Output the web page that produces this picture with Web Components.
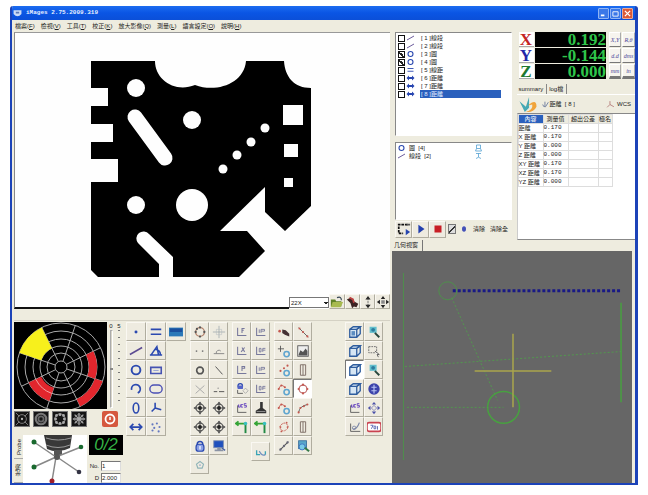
<!DOCTYPE html>
<html lang="zh-Hant">
<head>
<meta charset="utf-8">
<title>iMages 2.75.2009.319</title>
<style>
  html, body { height: 100%; margin: 0; }
  body {
    box-sizing: border-box; padding: 6px 10px 12px; background: #fff; color: #222;
    font-family: "Liberation Sans", "Noto Sans CJK TC", sans-serif; font-size: 6px; line-height: 8px;
  }
</style>
</head>
<body>
<app-window></app-window>
<script>
const define = (name, html, setup) => {
  const t = document.createElement('template');
  t.innerHTML = '<style>*{box-sizing:border-box}button,input,select{font:inherit;color:inherit;margin:0;padding:0;border-radius:0}svg{display:block}</style>' + html;
  customElements.define(name, class extends HTMLElement {
    constructor() {
      super();
      this.attachShadow({ mode: 'open' }).appendChild(t.content.cloneNode(true));
    }
    connectedCallback() { if (setup && !this.ready) { this.ready = true; setup(this, this.shadowRoot); } }
  });
};

const B = '#2b49b0', D = '#555', R = '#c4574e', L = '#77789c';
const p = (d, c = B, w = 1.5, f = 'none') => `<path d="${d}" fill="${f}" stroke="${c}" stroke-width="${w}"/>`;
const c = (x, y, r, s = B, w = 1.5, f = 'none') => `<circle cx="${x}" cy="${y}" r="${r}" fill="${f}" stroke="${s}" stroke-width="${w}"/>`;
const dots = (list, col = B, r = 1.1) => list.map(([x, y]) => `<circle cx="${x}" cy="${y}" r="${r}" fill="${col}"/>`).join('');
const target = p('M8 1V15M1 8H15', D, 1.2) + c(8, 8, 4.5, D, 1.4) + dots([[8, 8]], '#222', 2.2) + p('M8 1l-1.5 2h3zM8 15l-1.5-2h3zM1 8l2-1.5v3zM15 8l-2-1.5v3z', D, .5, D);
const axis = p('M3 3V12H13', L, 1.2);
const cube = p('M2 5H10V14H2ZM2 5L6 2H14L10 5M14 2V10L10 14', '#2f5d9e', 1.5, '#d6e6f4') + p('M10 5L14 2', '#2f5d9e', 1.4);
const blueRing = c(11, 11.5, 3, '#5fa5cf', 1.8);
const ICONS = {
  point: dots([[8, 8]], B, 1.7),
  lines: p('M2 5H14M2 10.5H14', B, 1.8),
  screen: '<rect x="0" y="3" width="16" height="10" fill="#2a78b8"/><rect x="1" y="4" width="14" height="4" fill="#1a4f9d"/>',
  line: p('M1 12L15 4', '#5b4a91', 1.8),
  angle: p('M2 13L9 3L11 13M1 12.500H15M7 6Q13 7 13 12', B, 1.8),
  circle: c(8, 8, 5, B, 2.2),
  rect: p('M2 5H14V12H2Z', '#4653b2', 1.8) + p('M5 8.500H11', '#8b97d1', 1),
  arc: p('M3 9A5 5 0 1 1 10 12.5', B, 2),
  slot: '<rect x="1" y="3.500" width="14" height="9" rx="4.500" fill="none" stroke="#4b50b5" stroke-width="1.6"/>',
  ellipse: '<ellipse cx="8" cy="8" rx="3.2" ry="5.8" fill="none" stroke="#2b49b0" stroke-width="1.8"/>',
  fork: p('M7 2V8L3 12M7 8L14 10', B, 1.8),
  distance: p('M2 8H14M5 4.5L1.5 8L5 11.5M11 4.5L14.5 8L11 11.5', B, 2),
  measure: '<path d="M0 8L5 3V6H11V3L16 8L11 13V10H5V13Z" fill="#2745b0"/>',
  cloud: dots([[4, 5], [9, 4], [6, 9], [12, 8], [11, 13], [4, 12]], '#6478c0', 1.2),
  ringdots: c(8, 8, 5, '#b4836d', 1.6) + dots([[8, 2.8], [13, 8], [8, 13.2], [3, 8], [4.5, 4.5]], D, 1.3),
  crosshair: p('M8 1V15M1 8H15', '#96a0a8', .8) + p('M5 5H11V11H5Z', '#b5bcc0', .6),
  twodots: dots([[4, 8], [11, 8]], '#777', 1),
  perp: p('M2 11H14M5 11A3 3 0 0 1 10 8', '#888', 1.1),
  ring: c(8, 8.5, 3.8, D, 1.9),
  diag: p('M4 4L12 13', D, 1.1),
  cross: p('M3 4L13 13M13 4L3 13', '#aaa', 1.1),
  dashline: p('M2 11H6M8 11H14', D, 1.1) + dots([[7, 7]], '#888', .8),
  target,
  lock: c(8, 6, 3.2, B, 1.7) + '<rect x="3.5" y="6" width="9" height="8" rx="3" fill="#8ba0e5" stroke="#2b49b0" stroke-width="1.4"/><path d="M8 8V12" stroke="#fff" stroke-width="1.4"/>',
  monitor: '<rect x="2" y="2" width="11" height="8" fill="#1f50bd" stroke="#8090b0"/><path d="M6 10H10V12H13V14H3V12H6Z" fill="#8a93a4"/><path d="M11 10l4 3" stroke="#4660a0" stroke-width="1.5"/>',
  penta: p('M8 4L12 7L10.500 11.500H5.500L4 7Z', '#8fb3b8', 1.3) + dots([[8, 8]], '#9ac', 1),
  ax1: axis + p('M8 9V4H11M8 6H10', L, 1.2), ax2: axis + p('M7 9L11 4M8 4L11 9', L, 1.2), ax3: axis + p('M8 9V4H11V6H8', L, 1.2),
  ax4: axis + p('M6 9V5M8 5V9M8 5H12V7H8', L, 1), ax5: axis + p('M6 5H8V9H6ZM10 5H13M10 7H13M10 9V5', L, 1),
  axlock: c(6, 4.5, 2.6, B, 1.4) + '<rect x="3" y="4" width="6" height="4" fill="#5564c8"/>' + p('M3 9V13H9', D, 1) + p('M12 7L15 10L12 13L9 10Z', '#aaa', 1),
  wcs: p('M3 5V13H13', D, 1) + p('M4 4V7H6V4M9 4H7V7H9M13 3H10.500V5H13V7H10.500', '#6a4ac0', 1.1),
  stamp: '<path d="M7 1H10V8L14 11V14H2V11L7 8Z" fill="#333"/><path d="M3 12H13" stroke="#999"/>',
  green: p('M1 4H13M4 1.500L1 4L4 6.500', '#35a436', 2) + p('M12 5V15', '#228a44', 2.200) + dots([[12, 4]], '#38bfc2', 2),
  swap: p('M3 6V11H7M13 11V7', '#3aa4b5', 1.5) + p('M6 7Q9 13 13 11', '#7090c0', 1.3),
  hand: dots([[3, 7]], R, 1.5) + '<path d="M6 5L10 6L14 10V13L9 11L6 9Z" fill="#443033"/>',
  reddiag: p('M3 3L14 14', D, 1) + dots([[4, 4], [8, 8], [13, 13]], R, 1.2),
  plusring: p('M4 2V9M1 5.500H8', D, 1) + blueRing,
  picture: '<rect x="2" y="2" width="12" height="12" fill="#eee" stroke="#555"/><path d="M3 12L5 7L8 9L11 5L13 8V13H3Z" fill="#555"/>',
  dotring: dots([[4, 9], [8, 6], [12, 3]], R, 1.2) + blueRing,
  bars: p('M5 2H11V14H5ZM8 2V14', '#806f68', 1.1),
  arcring: p('M2 8Q4 1 9 6', R, 1) + dots([[2, 8], [5, 4], [9, 6]], R, 1.2) + blueRing,
  redring: c(8, 8, 4.5, '#bf6869', 1.3) + dots([[8, 3], [13, 8], [8, 13], [3, 8]], R, 1.2),
  curve: p('M3 13Q4 6 13 4', D, 1) + dots([[3, 13], [5, 8], [9, 6], [13, 4]], R, 1.2),
  redslot: '<rect x="3.500" y="4" width="9" height="8" rx="3.500" transform="rotate(-35 8 8)" fill="none" stroke="#c4574e" stroke-dasharray="2 1"/>' + dots([[4, 8], [12, 8], [11, 3], [5, 13]], R, 1),
  dashdiag: p('M3 13L13 3', D, 1.3) + dots([[4, 12], [8, 8], [12, 4]], '#667', 1.3),
  searchpic: '<rect x="3" y="2" width="9" height="9" fill="#58a6c9" stroke="#3b6e9b"/><circle cx="7" cy="9" r="3.500" fill="#79cbe7" stroke="#3b6ebe"/><path d="M10 10L15 14" stroke="#367a48" stroke-width="2.400"/>',
  cube,
  cubef: cube + '<rect x="4" y="7" width="4" height="5" fill="#5c8cc0"/>',
  zoom: '<rect x="3" y="2" width="8" height="7" fill="#63bfcd"/><circle cx="7" cy="5.500" r="2.200" fill="#2d7c9d"/><path d="M9 9L14 14" stroke="#27463c" stroke-width="2.200"/>',
  select: '<path d="M2 3H11V10H2Z" fill="none" stroke="#666" stroke-dasharray="2 1"/><path d="M9 8L14 12H11.500L13 15" fill="#fff" stroke="#555"/>',
  eye: '<circle cx="8" cy="8" r="6.500" fill="#3c43aa"/><path d="M8 3V13M5 6L11 6M5 10H11" stroke="#b9c4f4" stroke-width="1.300"/>',
  move: p('M8 5L11 8L8 11L5 8Z', '#7d7fb9', 1) + '<path d="M8 1L10.500 4H5.500ZM8 15L10.500 12H5.500ZM1 8L4 5.500V10.500ZM15 8L12 5.500V10.500Z" fill="#4a50a8"/>',
  axdraw: p('M3 4V13H14', D, 1) + p('M6 10Q10 11 13 3', '#7b86a6', 1.4) + c(7, 9, 2, '#7b86a6', 1),
  log: '<rect x="0" y="3" width="16" height="10" rx="2.500" fill="#fff" stroke="#c94350" stroke-width="1.800"/>' + p('M4 6H7L5 10M8 7H10V10H8ZM12 7V11', '#5260b0', 1),
  open: '<path d="M1 5H6L7 7H13V13H1Z" fill="#5f8126"/><path d="M3 8H15L12 14H1Z" fill="#a8ba4e"/><path d="M8 3Q13 1 13 6" fill="none" stroke="#345" stroke-width="1.300"/>',
  glove: '<path d="M1 5L5 3L9 7L14 10L12 14L9 13L7 15L5 9Z" fill="#3b2222"/><path d="M4 3L8 5L9 9" stroke="#bb4040" stroke-width="2" fill="none"/>',
  updown: '<path d="M8 1L11 5H5ZM8 15L11 11H5Z" fill="#222"/><path d="M8 4V12" stroke="#555" stroke-dasharray="2 1"/>',
  pan: '<path d="M8 1L10.500 4.500H5.500ZM8 15L10.500 11.500H5.500ZM1 8L4.500 5.500V10.500ZM15 8L11.500 5.500V10.500Z" fill="#222"/><rect x="6" y="6" width="4" height="4" fill="#888"/>',
  marq: '<path d="M12 3H2V13H7" fill="none" stroke="#111" stroke-width="2" stroke-dasharray="3 1"/><path d="M10 8L15 11.500L10 15Z" fill="#2746b0"/><path d="M11 3H15" stroke="#555" stroke-width="2"/>',
  play: '<path d="M5 3L12 8L5 13Z" fill="#223fae"/>',
  stop: '<rect x="4" y="4" width="8" height="8" fill="#c81e25"/>',
  dot: '<ellipse cx="8" cy="8" rx="4" ry="5.500" fill="#4350b8"/>',
  ftop: p('M4 2H12V9H4ZM4 9L2 14H14L12 9', '#4a9bcf', 1.5),
  fbot: p('M3 3H13M8 3V10M3 13Q8 8 13 13', '#4a9bcf', 1.5),
  done: '<path d="M0 5L6 10L9 1L9 11L5 15Z" fill="#45a9b4"/><path d="M8 9Q16 2 16 10Q13 16 6 15Q13 13 12 8Z" fill="#f0a33a"/>',
  probe: p('M3 8Q4 13 8 12L13 4M7 3V11', '#5a6c94', 1.4),
  coord: p('M7 2V8L2 13M7 8L14 12', '#aa6666', 1.3),
  power: '<rect width="16" height="16" rx="2" fill="#d5583f"/><circle cx="8" cy="8" r="4.500" fill="none" stroke="#fff" stroke-width="1.800"/><path d="M8 6V9" stroke="#fff" stroke-width="1.500"/>',
  appicon: '<path d="M1 2H15V9Q8 17 1 9Z" fill="#cddcf6"/><path d="M5 5H11V8H5Z" fill="#5a79b8"/>'
};

define('tool-icon', `<style>:host{display:block;width:14px;height:14px}svg{width:100%;height:100%}</style><svg viewBox="0 0 16 16" aria-hidden="true"></svg>`,
  (el, root) => { root.querySelector('svg').innerHTML = ICONS[el.getAttribute('name')] || ''; });

define('tool-button', `<style>
  :host{display:block}
  button{width:100%;height:100%;display:grid;place-items:center;background:#eeebe0;border:1px solid;border-color:#faf8f2 #b0ad9f #b0ad9f #faf8f2}
  :host([on]) button{background:#fff;border-color:#777 #fff #fff #777}
  </style><button type="button"></button>`,
  (el, root) => {
    const n = el.getAttribute('name'), b = root.querySelector('button');
    b.setAttribute('aria-label', n);
    b.innerHTML = `<tool-icon name="${n}"></tool-icon>`;
  });

define('tool-grid', `<style>
  :host{display:grid;grid-template-columns:repeat(var(--cols,2),var(--cell,19px));grid-auto-rows:19px;align-content:start}
  </style>`,
  (el, root) => {
    for (const n of el.getAttribute('tools').split(' ')) {
      if (n === '-') { root.append(document.createElement('span')); continue; }
      const b = document.createElement('tool-button');
      b.setAttribute('name', n.replace('!', ''));
      if (n.endsWith('!')) b.setAttribute('on', '');
      root.append(b);
    }
  });

define('title-bar', `<style>
  :host{display:flex;align-items:center;gap:4px;height:14px;padding:0 2px 0 1px;background:linear-gradient(#1c6cf0,#0a55e4 50%,#0b4fd8);color:#e8f0ff}
  tool-icon{width:9px;height:9px}
  h1{margin:0;flex:1;font:bold 6px/12px "Liberation Mono",monospace}
  div{display:flex;gap:1px}
  button{width:11px;height:11px;border:1px solid #8fb4f4;border-radius:1px;background:#3b78e8;display:grid;place-items:center}
  button:last-child{background:#db5a38;border-color:#eaa995}
  svg{width:7px;height:7px}
  </style><tool-icon name="appicon"></tool-icon><h1><slot></slot></h1>
  <div><button aria-label="最小化"><svg viewBox="0 0 8 8"><path d="M1 6H5" stroke="#fff" stroke-width="2"/></svg></button>
  <button aria-label="最大化"><svg viewBox="0 0 8 8"><path d="M1 2H7V7H1Z" fill="none" stroke="#fff"/></svg></button>
  <button aria-label="關閉"><svg viewBox="0 0 8 8"><path d="M1 1L7 7M7 1L1 7" stroke="#fff" stroke-width="1.500"/></svg></button></div>`);

define('menu-bar', `<style>
  :host{display:flex;gap:6px;height:11px;padding-left:3px;background:#eeecdf}
  button{border:0;background:none;line-height:10px;white-space:nowrap}
  </style>`, (el, root) => {
  [['檔案', 'F'], ['檢視', 'V'], ['工具', 'T'], ['校正', 'K'], ['放大影像', 'Q'], ['測量', 'L'], ['語言設定', 'O'], ['說明', 'H']].forEach(([t, k]) => {
    const b = document.createElement('button'); b.innerHTML = `${t}(<u>${k}</u>)`; root.append(b);
  });
});

define('part-view', `<style>
  :host{display:block;min-height:0;background:#fefefe;border-top:1px solid #999;border-left:1px solid #888}
  svg{width:100%;height:100%}
  </style><svg viewBox="15 33 375 260" preserveAspectRatio="xMinYMin meet" role="img" aria-label="工件影像">
  <path d="M91 61H155C155 80 175 93 195 85C216 93 244 84 246 61H284C285 77 294 88 311 88V206L285 231L265 212V187L220 231H247L265 251L239 277H173V257L149 234A6.500 6.500 0 0 0 138 243L159 264V277H98L91 270V182H118V159H91V142H113V124H91V106H108V88H91Z"/>
  <g fill="#fefefe"><circle cx="136" cy="88" r="9"/><circle cx="192" cy="120" r="9"/><circle cx="136" cy="205" r="9"/><circle cx="192" cy="205" r="16"/>
  <circle cx="223" cy="169" r="4.500"/><circle cx="237" cy="155" r="4.500"/><circle cx="251" cy="142" r="4.500"/><circle cx="265" cy="128" r="4.500"/>
  <path d="M283 105H303V125H283ZM284 144H298V157H284ZM284 178H293V187H284Z"/></g>
  <path d="M135 117L165 158" stroke="#fefefe" stroke-width="15" stroke-linecap="round"/></svg>`);

define('view-bar', `<style>
  :host{display:flex;height:15px;background:#eeecdf}
  .edge{flex:1;background:#fefefe;border-bottom:2px solid #111;border-left:1px solid #888}
  .pick{background:#fefefe;padding-top:3px}
  select{display:block;width:40px;height:11px;border:1px solid #777;background:#fff;padding-left:1px;appearance:none;
    background-image:linear-gradient(45deg,transparent 50%,#222 50%),linear-gradient(-45deg,transparent 50%,#222 50%);background-size:2px 3px;background-position:34px 4px,36px 4px;background-repeat:no-repeat}
  tool-button{width:16px;height:15px}
  tool-button + tool-button{width:15px}
  </style><div class="edge"></div><div class="pick"><select aria-label="倍率"><option>22X</option></select></div><tool-button name="open"></tool-button><tool-button name="glove"></tool-button><tool-button name="updown"></tool-button><tool-button name="pan"></tool-button>`);

define('ring-light', `<style>
  :host{display:flex;flex-direction:column;width:109px;gap:2px}
  .top{display:flex;height:87px}
  .ring{width:93px;height:87px;background:#000}
  .scale{flex:1;display:grid;grid-template-columns:1fr 1fr;grid-template-rows:8px 1fr;justify-items:center}
  input{appearance:none;writing-mode:vertical-lr;width:3px;height:78px;background:#d8d5c8;border:1px solid;border-color:#aaa #fff #fff #aaa}
  input::-webkit-slider-thumb{appearance:none;width:3px;height:2px;background:#888}
  .ticks{width:2px;height:76px;background:repeating-linear-gradient(#777 0 1px,transparent 1px 7px)}
  .modes{display:flex;gap:3px;height:16px}
  .modes button{width:16px;height:16px;padding:0;border:1px solid #777;background:#151515}
  .modes button:last-child{margin-left:auto;margin-right:5px;border:0;background:none}
  .modes tool-icon{width:16px;height:16px}
  </style>
  <div class="top"><svg class="ring" viewBox="14 321 93 87" role="img" aria-label="環形燈"></svg>
  <div class="scale"><label for="lv">0</label><span>5</span><input id="lv" type="range"><div class="ticks"></div></div></div>
  <div class="modes"></div>`, (el, root) => {
  const X = 61, Y = 366, rad = a => a * Math.PI / 180;
  const pt = (r, a) => `${X + r * Math.cos(rad(a))} ${Y + r * Math.sin(rad(a))}`;
  const sec = (r1, r2, a, f) => `<path d="M${pt(r1, a)}L${pt(r2, a)}A${r2} ${r2} 0 0 1 ${pt(r2, a + 45)}L${pt(r1, a + 45)}A${r1} ${r1} 0 0 0 ${pt(r1, a)}Z" fill="${f}"/>`;
  let s = '';
  for (const r of [6, 14, 21, 28, 36, 44]) s += c(X, Y, r, '#aaa', 1);
  for (let a = 19; a < 379; a += 45) s += `<path d="M${pt(6, a)}L${pt(44, a)}" stroke="#aaa"/>`;
  s += sec(21, 44, 199, '#f7f01c') + sec(28, 36, -26, '#e2262d') + sec(36, 44, 19, '#e2262d') + sec(22, 36, 109, '#e2262d');
  s += `<path d="M${pt(28, 109)}A28 28 0 0 1 ${pt(28, 154)}" stroke="#f2a0a0" fill="none"/>`;
  root.querySelector('.ring').innerHTML = s;
  const g = '#888';
  const art = [c(8, 8, 5, g, 1) + p('M1 1L5 5M15 1L11 5M1 15L5 11M15 15L11 11', g, 1) + dots([[8, 8]], '#bbb', 1.3),
    c(8, 8, 6, '#777', 2.5) + c(8, 8, 3, '#666', 2),
    c(8, 8, 6, g, 1) + dots([[4, 4], [8, 3], [12, 4], [4, 12], [8, 13], [12, 12], [3, 8], [13, 8]], '#aaa', 1.6),
    p('M8 1V15M1 8H15M3 3L13 13M13 3L3 13', '#aaa', 1.5) + c(8, 8, 5, g, 1)];
  const m = root.querySelector('.modes');
  m.innerHTML = art.map((a, i) => `<button aria-label="燈光 ${i + 1}"><svg viewBox="0 0 16 16">${a}</svg></button>`).join('') + '<button aria-label="電源"><tool-icon name="power"></tool-icon></button>';
});

define('probe-panel', `<style>
  :host{display:flex;width:109px;height:48px}
  .tabs{width:9px;display:flex;flex-direction:column;border-right:1px solid #bbb}
  .tabs button{writing-mode:vertical-rl;transform:rotate(180deg);flex:1;width:9px;border:0;border-top:1px solid #aaa;background:#eeecdf;line-height:8px}
  .pic{width:64px;height:48px;background:#fff}
  .side{flex:1;margin-left:2px}
  output{display:block;height:20px;background:#000;color:#35b446;font:italic 17px/19px "Liberation Sans",sans-serif;text-align:center}
  .f{display:grid;grid-template-columns:10px 20px;gap:2px 2px;padding-top:6px;line-height:10px;text-align:right}
  input{width:20px;height:10px;border:1px solid;border-color:#777 #ddd #ddd #777;background:#fff}
  </style>
  <div class="tabs"><button>Probe</button><button>光源</button></div>
  <svg class="pic" viewBox="23 433 64 48" role="img" aria-label="測頭">
    <path d="M44 433H72L70 446Q58 452 47 447Z" fill="#383838"/><path d="M46 436Q58 440 71 436M46 443Q58 448 70 443" stroke="#999" fill="none"/><path d="M54 448H62V453H54Z" fill="#555"/>
    <path d="M34 440L56 455L34 465M56 455L81 445M57 455L79 470M56 455L52 479" fill="none" stroke="#888" stroke-width="1.500"/><circle cx="57" cy="455" r="3" fill="#555"/>
    <circle cx="34" cy="440" r="2.500" fill="#19692e"/><circle cx="34" cy="465" r="2.500" fill="#19692e"/><circle cx="81" cy="445" r="2.300" fill="#19692e"/><circle cx="79" cy="470" r="2.300" fill="#334"/><circle cx="52" cy="479" r="2.500" fill="#a01f2a"/>
  </svg>
  <div class="side"><output>0/2</output><div class="f"><label for="no">No.</label><input id="no" value="1"><label for="d">D</label><input id="d" value="2.000"></div></div>`);

define('control-deck', `<style>
  :host{display:flex;gap:3px;margin-top:11px;padding:1px 7px 0 0;height:163px;border-top:1px solid #d4d1c4}
  .left{display:flex;flex-direction:column;justify-content:space-between}
  .g{display:flex;flex:1;gap:4px}
  .one{--cols:3;--cell:20px}
  .view{margin-left:auto}
  .c{display:flex;flex-direction:column;gap:6px}
  </style>
  <div class="left"><ring-light></ring-light><probe-panel></probe-panel></div>
  <div class="g">
  <tool-grid class="one" tools="point lines screen line angle - circle rect - arc slot - ellipse fork - distance cloud"></tool-grid>
  <tool-grid tools="ringdots crosshair twodots perp ring diag cross dashline target target target target lock monitor penta"></tool-grid>
  <div class="c"><tool-grid tools="ax1 ax4 ax2 ax5 ax3 ax4 axlock ax5 wcs stamp green green"></tool-grid><tool-grid tools="- swap"></tool-grid></div>
  <tool-grid tools="hand reddiag plusring picture dotring bars arcring redring! arcring curve redslot bars dashdiag searchpic"></tool-grid>
  <tool-grid class="view" tools="cubef zoom cube select cube! zoom cube eye wcs move axdraw log"></tool-grid>
  </div>`);

define('feature-list', `<style>
  :host{display:block;height:104px;background:#fff;border:1px solid;border-color:#888 #fff #fff #888;padding:1px 10px 0 2px}
  ul{margin:0;padding:0;list-style:none}
  li{display:flex;align-items:center;height:8px}
  input{appearance:none;width:7px;height:7px;border:1px solid #111;background:#fff}
  input:checked{background:linear-gradient(45deg,transparent 30%,#222 30% 60%,transparent 60%)}
  tool-icon{width:9px;height:8px;margin:0 5px 0 1px}
  label{flex:1;white-space:nowrap;line-height:8px;padding-left:1px}
  .sel label{background:#2a60bd;color:#e2ecff}
  </style><ul></ul>`, (el, root) => {
  root.querySelector('ul').innerHTML = [['line', '線段'], ['line', '線段'], ['circle', '圓', 1], ['circle', '圓', 1], ['lines', '線距'], ['measure', '距離'], ['measure', '距離'], ['measure', '距離', 0, 1]]
    .map(([i, t, k, s], n) => `<li class="${s ? 'sel' : ''}"><input type="checkbox" id="f${n}" ${k ? 'checked' : ''}><tool-icon name="${i}"></tool-icon><label for="f${n}">[ ${n + 1} ]${t}</label></li>`).join('');
});

define('source-list', `<style>
  :host{display:block;height:78px;background:#fff;border:1px solid;border-color:#888 #fff #fff #888;padding:1px 1px}
  div{display:grid;grid-template-columns:9px 62px 10px;gap:3px;height:8px;align-items:center}
  tool-icon{width:9px;height:8px}
  </style><div><tool-icon name="circle"></tool-icon><span>圓 &nbsp;[4]</span><tool-icon name="ftop"></tool-icon></div>
  <div><tool-icon name="line"></tool-icon><span>線段 &nbsp;[2]</span><tool-icon name="fbot"></tool-icon></div>`);

define('run-bar', `<style>
  :host{display:flex;align-items:center;height:18px}
  tool-button{width:17px;height:17px}
  input{appearance:none;width:8px;height:10px;margin:0 4px 0 2px;border:1px solid #777;background:linear-gradient(-45deg,#ddd 40%,#333 40% 55%,#ddd 55%)}
  tool-icon{width:8px;height:8px}
  button{border:0;background:none;white-space:nowrap;margin-left:5px}
  </style><tool-button name="marq"></tool-button><tool-button name="play"></tool-button><tool-button name="stop"></tool-button>
  <input type="checkbox" checked aria-label="編輯"><tool-icon name="dot"></tool-icon><button>清除</button><button>清除全</button>`);

define('dro-panel', `<style>
  :host{display:grid;grid-template-columns:1fr 26px;height:46px;padding-left:2px;gap:3px}
  .r{display:grid;grid-template-columns:15px 1fr;grid-auto-rows:15px;gap:1px;align-content:start}
  b,output{display:block;font:bold 17px/15px "Liberation Serif",serif}
  b{text-align:center;background:#fff;border-bottom:1px solid #aaa}
  output{background:#000;color:#2fc54b;text-align:right}
  .u{display:grid;grid-template-columns:12px 13px;grid-auto-rows:15px;gap:1px}
  .u button{background:#f6f4ee;border:1px solid;border-color:#fff #aaa #777 #fff;font:italic 6px/6px "Liberation Serif",serif;color:#4c4a9c;white-space:nowrap}
  .u button:nth-child(n+5){border-bottom:3px solid #777}
  </style><div class="r"><b style="color:#c42525">X</b><output>0.192</output><b style="color:#2428a8">Y</b><output>-0.144</output><b style="color:#207830">Z</b><output>0.000</output></div>
  <div class="u"><button>X,Y</button><button>R,θ</button><button>d.d</button><button>dms</button><button>mm</button><button>in</button></div>`);

define('result-panel', `<style>
  :host{display:flex;flex-direction:column;min-height:0;flex:1;padding-top:6px}
  nav{display:flex;height:10px}
  nav button{border:0;border-right:1px solid #888;background:none;padding:0 3px 0 2px;line-height:9px}
  header{display:flex;align-items:center;height:19px;border-top:1px solid #fff;padding-left:2px}
  header .big{width:18px;height:17px;margin-right:4px}
  header tool-icon{width:9px;height:9px}
  header span{margin-right:4px;white-space:nowrap}
  header .w{margin-left:auto}
  section{flex:1;background:#fff;border-top:1px solid #888;border-bottom:1px solid #888;border-left:1px solid #ccc}
  table{border-collapse:collapse;table-layout:fixed;width:94px}
  th,td{height:9px;padding:0;font-weight:normal;line-height:8px;border:1px solid #ddd;text-align:left;white-space:nowrap}
  thead th{background:#eeecdf;text-align:center}
  thead th:first-child{background:#2a60bd;color:#fff}
  tbody td{font-family:"Liberation Mono",monospace}
  </style>
  <nav><button>summary</button><button>log檔</button></nav>
  <header><tool-icon class="big" name="done"></tool-icon><tool-icon name="probe"></tool-icon><span>距離 &nbsp;[ 8 ]</span><tool-icon class="w" name="coord"></tool-icon><span>&nbsp;WCS</span></header>
  <section><table><colgroup><col style="width:25px"><col style="width:25px"><col style="width:30px"><col style="width:14px"></colgroup>
  <thead><tr><th>內容</th><th>測量值</th><th>超出公差</th><th>極名</th></tr></thead><tbody></tbody></table></section>`, (el, root) => {
  root.querySelector('tbody').innerHTML = [['', '0.170'], ['X', '0.170'], ['Y', '0.000'], ['Z', '0.000'], ['XY', '0.170'], ['XZ', '0.170'], ['YZ', '0.000']]
    .map(([a, v]) => `<tr><th>${a} 距離</th><td>${v}</td><td></td><td></td></tr>`).join('');
});

define('geometry-view', `<style>
  :host{display:flex;flex-direction:column;flex:1;min-height:0}
  button{align-self:flex-start;height:11px;border:0;border-right:1px solid #777;background:none;padding:0 4px 0 2px;line-height:9px}
  div{flex:1;min-height:0;background:#666;margin-right:3px}
  svg{width:100%;height:100%}
  </style><button>几何視窗</button><div><svg viewBox="392 252 241 229" role="img" aria-label="几何視窗" fill="none" stroke="#48a040">
  <path d="M403.500 272V460" stroke="#4f8f4c"/><circle cx="448" cy="290" r="9" stroke="#4f8f4c"/><circle cx="504" cy="407" r="16" stroke-width="1.500"/>
  <path d="M622 302V402" stroke-width="1.500"/><path d="M405 366L622 351M407 407H504M452 297L498 400" stroke="#52974e" stroke-dasharray="2 2"/>
  <path d="M453 290H623" stroke="#191985" stroke-width="3" stroke-dasharray="3 2"/><path d="M475 370.500H552M513.500 333V407" stroke="#aaa54c" stroke-width="1.500"/></svg></div>`);

define('app-window', `<style>
  :host{display:flex;flex-direction:column;height:100%;background:#eeecdf;border:solid #1c43b8;border-width:0 3px 2px 2px;border-radius:3px 3px 0 0;overflow:hidden}
  main{flex:1;min-height:0;display:grid;grid-template-columns:minmax(0,380fr) minmax(0,243fr)}
  .left,.right{display:flex;flex-direction:column;min-width:0;min-height:0}
  .left{padding:1px 2px 0}
  .left part-view{flex:1}
  .top{display:grid;grid-template-columns:minmax(0,117fr) minmax(0,119fr);gap:5px;height:209px;padding:1px 0 0 3px}
  .col{display:flex;flex-direction:column;min-width:0}
  source-list{margin-top:6px}
  </style>
  <title-bar>iMages 2.75.2009.319</title-bar><menu-bar></menu-bar>
  <main><div class="left"><part-view></part-view><view-bar></view-bar><control-deck></control-deck></div>
  <div class="right"><div class="top"><div class="col"><feature-list></feature-list><source-list></source-list><run-bar></run-bar></div>
  <div class="col"><dro-panel></dro-panel><result-panel></result-panel></div></div><geometry-view></geometry-view></div></main>`);
</script>
</body>
</html>
